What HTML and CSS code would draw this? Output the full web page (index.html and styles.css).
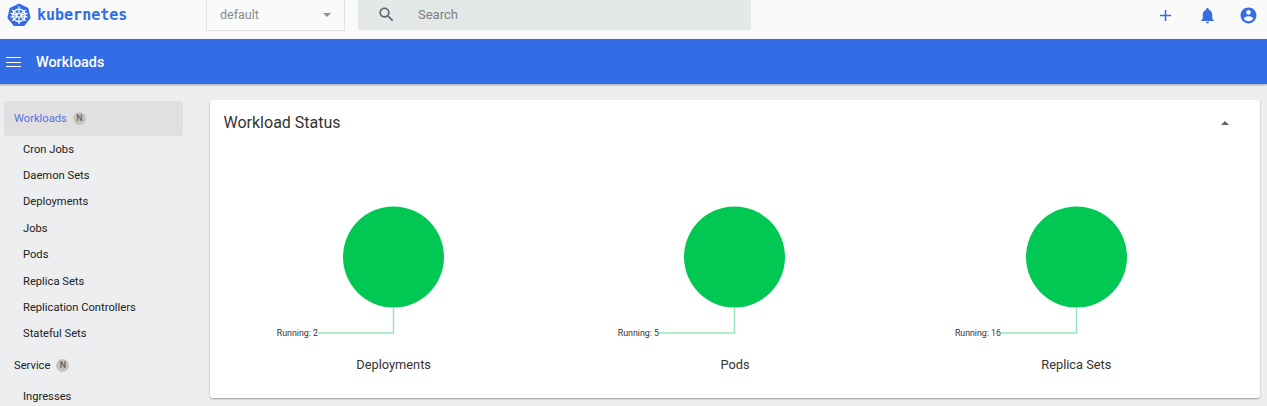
FILE: index.html
```html
<!DOCTYPE html>
<html lang="en">
<head>
  <meta charset="UTF-8">
  <meta name="viewport" content="width=device-width, initial-scale=1.0">
  <title>Workloads - Kubernetes Dashboard</title>
  <link rel="stylesheet" href="styles.css">
</head>
<body>
  <!-- Top toolbar -->
  <header class="topbar">
    <a class="brand">
      <svg class="brand-logo" viewBox="0 0 24 24" width="24" height="24">
        <path class="logo-bg" d="M12 .4 21.3 4.9 23.6 15 17.2 23 6.8 23 .4 15 2.7 4.9Z"/>
        <g class="logo-wheel">
          <circle cx="12" cy="12.3" r="6.2"/>
          <path d="M12 3.6V21M5.2 6.9 18.8 17.7M18.8 6.9 5.2 17.7M3.5 14.2 20.5 10.4M20.5 14.2 3.5 10.4"/>
        </g>
        <circle class="logo-hub" cx="12" cy="12.3" r="1.8"/>
      </svg>
      <span class="brand-name">kubernetes</span>
    </a>
    <div class="ns-select">
      <span>default</span>
      <i class="caret"></i>
    </div>
    <div class="search">
      <svg class="search-icon" viewBox="0 0 24 24" width="19" height="19"><path d="M15.5 14h-.79l-.28-.27C15.41 12.59 16 11.11 16 9.5 16 5.91 13.09 3 9.5 3S3 5.91 3 9.5 5.91 16 9.5 16c1.61 0 3.09-.59 4.23-1.57l.27.28v.79l5 4.99L20.49 19l-4.99-5zm-6 0C7.01 14 5 11.99 5 9.5S7.01 5 9.5 5 14 7.01 14 9.5 11.99 14 9.5 14z"/></svg>
      <span>Search</span>
    </div>
    <div class="actions">
      <svg viewBox="0 0 24 24" width="19" height="19"><path d="M19 13h-6v6h-2v-6H5v-2h6V5h2v6h6v2z"/></svg>
      <svg viewBox="0 0 24 24" width="19" height="19"><path d="M12 22c1.1 0 2-.9 2-2h-4c0 1.1.89 2 2 2zm6-6v-5c0-3.07-1.64-5.64-4.5-6.32V4c0-.83-.67-1.5-1.5-1.5s-1.5.67-1.5 1.5v.68C7.63 5.36 6 7.92 6 11v5l-2 2v1h16v-1l-2-2z"/></svg>
      <svg viewBox="0 0 24 24" width="19" height="19"><path d="M12 2C6.48 2 2 6.48 2 12s4.48 10 10 10 10-4.48 10-10S17.52 2 12 2zm0 3c1.66 0 3 1.34 3 3s-1.34 3-3 3-3-1.34-3-3 1.34-3 3-3zm0 14.2c-2.5 0-4.71-1.28-6-3.22.03-1.99 4-3.08 6-3.08 1.99 0 5.97 1.09 6 3.08-1.29 1.94-3.5 3.22-6 3.22z"/></svg>
    </div>
  </header>

  <!-- Blue title bar -->
  <div class="titlebar">
    <div class="menu-btn"><span></span><span></span><span></span></div>
    <h1>Workloads</h1>
  </div>

  <div class="layout">
    <!-- Side navigation -->
    <nav class="sidenav">
      <div class="nav-head nav-head-active">Workloads <b class="ns-badge">N</b></div>
      <a class="nav-item">Cron Jobs</a>
      <a class="nav-item">Daemon Sets</a>
      <a class="nav-item">Deployments</a>
      <a class="nav-item">Jobs</a>
      <a class="nav-item">Pods</a>
      <a class="nav-item">Replica Sets</a>
      <a class="nav-item">Replication Controllers</a>
      <a class="nav-item">Stateful Sets</a>
      <div class="nav-head">Service <b class="ns-badge">N</b></div>
      <a class="nav-item">Ingresses</a>
    </nav>

    <!-- Workload status card -->
    <main class="content">
      <section class="card">
        <div class="card-head">
          <h2>Workload Status</h2>
          <i class="caret caret-up"></i>
        </div>
        <div class="charts">
          <figure class="chart">
            <svg viewBox="0 0 341 195" width="341" height="195">
              <circle class="pie" cx="170.5" cy="107" r="50.5"/>
              <polyline class="pie-line" points="170.5,157 170.5,183 95,183"/>
              <text class="pie-label" x="95" y="186">Running: 2</text>
            </svg>
            <figcaption>Deployments</figcaption>
          </figure>
          <figure class="chart">
            <svg viewBox="0 0 341 195" width="341" height="195">
              <circle class="pie" cx="170.5" cy="107" r="50.5"/>
              <polyline class="pie-line" points="170.5,157 170.5,183 95,183"/>
              <text class="pie-label" x="95" y="186">Running: 5</text>
            </svg>
            <figcaption>Pods</figcaption>
          </figure>
          <figure class="chart">
            <svg viewBox="0 0 341 195" width="341" height="195">
              <circle class="pie" cx="170.5" cy="107" r="50.5"/>
              <polyline class="pie-line" points="170.5,157 170.5,183 95,183"/>
              <text class="pie-label" x="95" y="186">Running: 16</text>
            </svg>
            <figcaption>Replica Sets</figcaption>
          </figure>
        </div>
      </section>
    </main>
  </div>
</body>
</html>
```

FILE: styles.css
```css
* {
  margin: 0;
  padding: 0;
  box-sizing: border-box;
}
html, body {
  height: 100%;
}
body {
  font-family: Roboto, "Liberation Sans", sans-serif;
  background-color: #edeef0;
  color: #212121;
  overflow: hidden;
}
/* Top toolbar */
.topbar {
  display: flex;
  align-items: flex-start;
  height: 39px;
  background-color: #fafafa;
}
.brand {
  display: flex;
  align-items: center;
  gap: 6px;
  width: 206px;
  height: 30px;
  padding-left: 7px;
}
.brand-logo {
  flex: none;
}
.logo-bg {
  fill: #326de6;
}
.logo-wheel {
  fill: none;
  stroke: #fff;
  stroke-width: 1.3;
}
.logo-hub {
  fill: #326de6;
  stroke: #fff;
  stroke-width: 1;
}
.brand-name {
  font-family: "DejaVu Sans Mono", monospace;
  font-size: 15px;
  font-weight: 700;
  color: #326de6;
}
.ns-select {
  display: flex;
  align-items: center;
  justify-content: space-between;
  width: 139px;
  height: 31px;
  padding: 0 13px 1px 13px;
  border: 1px solid #dfe1e3;
  border-top: 0;
  font-size: 12.5px;
  color: #8a8a8a;
  background-color: #fafafa;
}
.caret {
  display: block;
  width: 0;
  height: 0;
  border-left: 4.5px solid transparent;
  border-right: 4.5px solid transparent;
  border-top: 4.5px solid #8f9193;
}
.caret-up {
  border-top: 0;
  border-bottom: 4.5px solid #5f6368;
}
.search {
  display: flex;
  align-items: center;
  gap: 22px;
  width: 393px;
  height: 30px;
  margin-left: 13px;
  padding: 0 0 1px 19px;
  background-color: #e5e8e9;
  border-radius: 0 0 2px 2px;
  font-size: 13px;
  color: #7b7f83;
}
.search-icon {
  fill: #5f6368;
}
.actions {
  display: flex;
  align-items: center;
  gap: 22.5px;
  height: 30px;
  margin-left: auto;
  padding-right: 9px;
}
.actions svg {
  fill: #326de6;
}
/* Blue title bar */
.titlebar {
  display: flex;
  align-items: center;
  gap: 15px;
  height: 45px;
  padding: 1px 0 0 6px;
  background-color: #326de6;
  box-shadow: 0 1px 2px rgba(0, 0, 0, 0.35);
  position: relative;
}
.titlebar h1 {
  font-size: 14.4px;
  font-weight: 500;
  color: #fff;
}
.menu-btn {
  display: flex;
  flex-direction: column;
  gap: 3.5px;
  width: 15px;
}
.menu-btn span {
  height: 1px;
  background-color: #fff;
}
.layout {
  display: flex;
  padding-top: 16px;
}
/* Side navigation */
.sidenav {
  flex: none;
  width: 210px;
  padding: 1px 27px 0 4px;
  font-size: 11.2px;
}
.nav-head {
  display: flex;
  align-items: center;
  gap: 6px;
  height: 35px;
  padding-left: 10px;
  margin: 0.6px 0 1px;
  font-weight: 400;
  color: #212121;
}
.nav-head-active {
  margin: 0;
  padding-bottom: 1px;
  background-color: #e0e0e0;
  border-radius: 2px;
  color: #5a6fe6;
}
.ns-badge {
  display: flex;
  align-items: center;
  justify-content: center;
  width: 13px;
  height: 13px;
  border-radius: 50%;
  background-color: #c4c4c4;
  color: #616161;
  font-size: 9px;
  font-weight: 500;
}
.nav-item {
  display: flex;
  align-items: center;
  height: 26.4px;
  padding-left: 19px;
}
/* Workload status card */
.content {
  flex: 1;
  padding-right: 7px;
}
.card {
  height: 298px;
  background-color: #fff;
  border-radius: 3px;
  box-shadow: 0 1px 2px rgba(0, 0, 0, 0.35);
}
.card-head {
  display: flex;
  align-items: center;
  justify-content: space-between;
  height: 45px;
  padding: 0 31px 0 13.5px;
  color: #333;
}
.card-head h2 {
  font-size: 16px;
  font-weight: 400;
}
.charts {
  display: grid;
  grid-template-columns: repeat(3, 1fr);
  padding: 5px 13px 0;
}
.chart {
  display: flex;
  flex-direction: column;
  align-items: center;
}
.chart figcaption {
  font-size: 12.8px;
  line-height: 16px;
  margin-top: 12px;
  color: #333;
}
.pie {
  fill: #00c853;
}
.pie-line {
  fill: none;
  stroke: #97e6b8;
  stroke-width: 1.5;
}
.pie-label {
  font-size: 8.8px;
  fill: #333;
  text-anchor: end;
}
```
